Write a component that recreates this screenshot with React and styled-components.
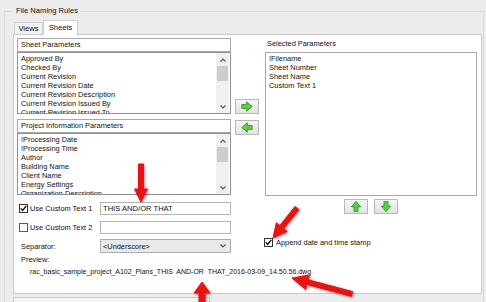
import React from 'react'
import styled, { createGlobalStyle } from 'styled-components'

const GlobalStyle = createGlobalStyle`
  html, body { margin: 0; padding: 0; }
  body {
    width: 486px;
    height: 302px;
    overflow: hidden;
    background: #ececec;
    font-family: "Liberation Sans", Arial, sans-serif;
    font-size: 7.4px;
    color: #111;
  }
`

const Page = styled.div`
  position: relative;
  width: 486px;
  height: 302px;
  overflow: hidden;
  padding: 0 2px 0 4px;
  box-sizing: border-box;
`

const Group = styled.fieldset`
  margin: 6px 0 0;
  padding: 0 1px 0 8px;
  border: 1px solid #dadada;
  border-bottom: none;
  min-width: 0;
`

const Legend = styled.legend`
  padding: 0 2px 0 3px;
  line-height: 10px;
  font-size: 7.6px;
`

const TabRow = styled.div`
  display: flex;
  align-items: flex-end;
  height: 19px;
  margin-bottom: -1px;
`

const Tab = styled.div`
  position: relative;
  z-index: ${p => (p.$active ? 1 : 0)};
  box-sizing: border-box;
  height: ${p => (p.$active ? '15px' : '12px')};
  width: ${p => p.$w}px;
  margin-left: ${p => (p.$active ? '0' : '1px')};
  margin-bottom: ${p => (p.$active ? '0' : '1px')};
  border: 1px solid #cfcfcf;
  border-bottom: none;
  background: ${p => (p.$active ? '#fff' : '#f2f2f2')};
  display: flex;
  align-items: center;
  justify-content: center;
  font-size: 7.6px;
  padding-bottom: ${p => (p.$active ? '2px' : '0')};
`

const Panel = styled.div`
  box-sizing: border-box;
  height: 260px;
  border: 1px solid #cacaca;
  background: #fff;
  padding: 3px 0 0 3px;
`

const Body = styled.div`
  display: flex;
  align-items: flex-start;
`

const LeftCol = styled.div`
  width: 214px;
  display: flex;
  flex-direction: column;
`

const Header = styled.div`
  box-sizing: border-box;
  height: 14px;
  margin-top: ${p => p.$top || 0}px;
  border: 1px solid #a9a9a9;
  padding-left: 3px;
  line-height: 12px;
`

const ListBox = styled.div`
  box-sizing: border-box;
  height: ${p => p.$h}px;
  margin-left: ${p => p.$ml || 0}px;
  border: 1px solid ${p => p.$border || '#8f9091'};
  display: flex;
  overflow: hidden;
`

const Items = styled.div`
  flex: 1;
  padding: 1px 2px 0 3px;
  line-height: 9px;
  white-space: nowrap;
  overflow: hidden;
`

const Scroll = styled.div`
  width: 13px;
  margin-right: 1px;
  background: #f0f0f0;
  display: flex;
  flex-direction: column;
`

const ScrollBtn = styled.div`
  height: 13px;
  display: flex;
  align-items: center;
  justify-content: center;
`

const Track = styled.div`
  flex: 1;
`

const Thumb = styled.div`
  height: 15px;
  margin: 0 1px;
  background: #cdcdcd;
`

const FormRow = styled.div`
  display: grid;
  grid-template-columns: 83px 131px;
  align-items: center;
  margin-top: ${p => p.$top}px;
`

const CheckLabel = styled.label`
  display: flex;
  align-items: center;
  gap: ${p => p.$gap || 2}px;
  padding-left: ${p => p.$pl ?? 2}px;
  margin-top: ${p => p.$top || 0}px;
  white-space: nowrap;
`

const Box = styled.span`
  box-sizing: border-box;
  width: 9px;
  height: 9px;
  border: 1px solid ${p => (p.$checked ? '#333' : '#5a5a5a')};
  background: #fff;
  display: flex;
  align-items: center;
  justify-content: center;
`

const FieldLabel = styled.span`
  padding-left: 4px;
`

const TextBox = styled.div`
  box-sizing: border-box;
  height: 13px;
  border: 1px solid #b5b5b5;
  background: #fff;
  padding-left: 2px;
  line-height: 11px;
  font-size: 7.6px;
`

const Combo = styled.div`
  box-sizing: border-box;
  height: 14px;
  border: 1px solid #acacac;
  background: #e9e9e9;
  padding: 0 4px 0 2px;
  display: flex;
  align-items: center;
  justify-content: space-between;
`

const MidCol = styled.div`
  width: 24px;
  margin-left: 4px;
  padding-top: 61px;
  display: flex;
  flex-direction: column;
  gap: 6px;
`

const IconButton = styled.div`
  box-sizing: border-box;
  width: 24px;
  height: 15px;
  border: 1px solid #b8b8b8;
  background: linear-gradient(#f6f6f6, #e2e2e2);
  display: flex;
  align-items: center;
  justify-content: center;
`

const RightCol = styled.div`
  width: 213px;
  margin-left: 5px;
  display: flex;
  flex-direction: column;
`

const Caption = styled.div`
  height: 14px;
  line-height: 12px;
  padding-left: 3px;
`

const ButtonPair = styled.div`
  display: flex;
  justify-content: center;
  gap: 6px;
  margin: 3px 0 0 1px;
`

const Preview = styled.div`
  margin-top: ${p => p.$top}px;
  padding-left: ${p => p.$pl}px;
  line-height: 10px;
  font-size: ${p => p.$size || 7.4}px;
  white-space: pre;
`

const BottomStrip = styled.div`
  box-sizing: border-box;
  width: 197px;
  height: 12px;
  margin-top: 3px;
  border: 1px solid #c8c8c8;
  background: #f4f4f4;
`

const Overlay = styled.svg`
  position: absolute;
  left: 0;
  top: 0;
  pointer-events: none;
  filter: drop-shadow(1px 1px 1px rgba(60, 0, 0, 0.45));
`

const Chevron = ({ up }) => (
  <svg width="6" height="4" viewBox="0 0 6 4">
    <polyline
      points={up ? '0.5,3.5 3,1 5.5,3.5' : '0.5,0.5 3,3 5.5,0.5'}
      fill="none"
      stroke="#555"
      strokeWidth="1.1"
    />
  </svg>
)

const Tick = () => (
  <svg width="7" height="7" viewBox="0 0 7 7">
    <polyline points="0.8,3.4 2.6,5.4 6.3,0.9" fill="none" stroke="#111" strokeWidth="1.4" />
  </svg>
)

// green arrow pointing right, rotated for the other directions
const GreenArrow = ({ dir }) => {
  const rot = { right: 0, down: 90, left: 180, up: 270 }[dir]
  return (
    <svg width="12" height="11" viewBox="0 0 12 11">
      <polygon
        transform={`rotate(${rot} 6 5.5)`}
        points="0.8,3.5 5.6,3.5 5.6,0.8 11.2,5.5 5.6,10.2 5.6,7.5 0.8,7.5"
        fill="#57d03a"
        stroke="#2f9f22"
        strokeWidth="0.9"
        strokeLinejoin="round"
      />
    </svg>
  )
}

const arrowPoints = ([x1, y1], [x2, y2], w, hw, hl) => {
  const dx = x2 - x1
  const dy = y2 - y1
  const len = Math.hypot(dx, dy)
  const ux = dx / len
  const uy = dy / len
  const nx = -uy
  const ny = ux
  const bx = x2 - ux * hl
  const by = y2 - uy * hl
  const pts = [
    [x1 + nx * w / 2, y1 + ny * w / 2],
    [bx + nx * w / 2, by + ny * w / 2],
    [bx + nx * hw / 2, by + ny * hw / 2],
    [x2, y2],
    [bx - nx * hw / 2, by - ny * hw / 2],
    [bx - nx * w / 2, by - ny * w / 2],
    [x1 - nx * w / 2, y1 - ny * w / 2]
  ]
  return pts.map(p => p.map(v => v.toFixed(1)).join(',')).join(' ')
}

const arrows = [
  { from: [141, 164], to: [141, 202], w: 5, hw: 13, hl: 13 },
  { from: [297, 208], to: [273, 238], w: 5, hw: 14, hl: 14 },
  { from: [202, 312], to: [202, 282], w: 6, hw: 16, hl: 11 },
  { from: [352, 294], to: [292, 278], w: 5, hw: 15, hl: 16 }
]

const sheetParams = [
  'Approved By',
  'Checked By',
  'Current Revision',
  'Current Revision Date',
  'Current Revision Description',
  'Current Revision Issued By',
  'Current Revision Issued To'
]

const projectParams = [
  '!Processing Date',
  '!Processing Time',
  'Author',
  'Building Name',
  'Client Name',
  'Energy Settings',
  'Organization Description'
]

const selectedParams = ['!Filename', 'Sheet Number', 'Sheet Name', 'Custom Text 1']

const ScrollList = ({ items }) => (
  <ListBox $h={62}>
    <Items>
      {items.map(item => (
        <div key={item}>{item}</div>
      ))}
    </Items>
    <Scroll>
      <ScrollBtn><Chevron up /></ScrollBtn>
      <Track><Thumb /></Track>
      <ScrollBtn><Chevron /></ScrollBtn>
    </Scroll>
  </ListBox>
)

export default function App() {
  return (
    <Page>
      <GlobalStyle />
      <Group>
        <Legend>File Naming Rules</Legend>
        <TabRow>
          <Tab $w={29}>Views</Tab>
          <Tab $w={35} $active>Sheets</Tab>
        </TabRow>
        <Panel>
          <Body>
            <LeftCol>
              <Header>Sheet Parameters</Header>
              <ScrollList items={sheetParams} />
              <Header $top={5}>Project Information Parameters</Header>
              <ScrollList items={projectParams} />

              <FormRow $top={7}>
                <CheckLabel>
                  <Box $checked><Tick /></Box>
                  Use Custom Text 1
                </CheckLabel>
                <TextBox>THIS AND/OR THAT</TextBox>
              </FormRow>
              <FormRow $top={6}>
                <CheckLabel>
                  <Box />
                  Use Custom Text 2
                </CheckLabel>
                <TextBox />
              </FormRow>
              <FormRow $top={5}>
                <FieldLabel>Separator:</FieldLabel>
                <Combo>
                  <span>&lt;Underscore&gt;</span>
                  <Chevron />
                </Combo>
              </FormRow>
            </LeftCol>

            <MidCol>
              <IconButton><GreenArrow dir="right" /></IconButton>
              <IconButton><GreenArrow dir="left" /></IconButton>
            </MidCol>

            <RightCol>
              <Caption>Selected Parameters</Caption>
              <ListBox $h={144} $ml={1} $border="#a9a9ae">
                <Items>
                  {selectedParams.map(item => (
                    <div key={item}>{item}</div>
                  ))}
                </Items>
              </ListBox>
              <ButtonPair>
                <IconButton><GreenArrow dir="up" /></IconButton>
                <IconButton><GreenArrow dir="down" /></IconButton>
              </ButtonPair>
              <CheckLabel $pl={0} $gap={3} $top={24}>
                <Box $checked><Tick /></Box>
                Append date and time stamp
              </CheckLabel>
            </RightCol>
          </Body>

          <Preview $top={2} $pl={4}>Preview:</Preview>
          <Preview $top={2} $pl={13} $size={7}>
            {'rac_basic_sample_project_A102_Plans_THIS  AND-OR  THAT_2016-03-09_14.50.56.dwg'}
          </Preview>
        </Panel>
        <BottomStrip />
      </Group>

      <Overlay width="486" height="302" viewBox="0 0 486 302">
        {arrows.map((a, i) => (
          <polygon
            key={i}
            points={arrowPoints(a.from, a.to, a.w, a.hw, a.hl)}
            fill="#ee1111"
            stroke="#ee1111"
            strokeWidth="1"
            strokeLinejoin="round"
          />
        ))}
      </Overlay>
    </Page>
  )
}
